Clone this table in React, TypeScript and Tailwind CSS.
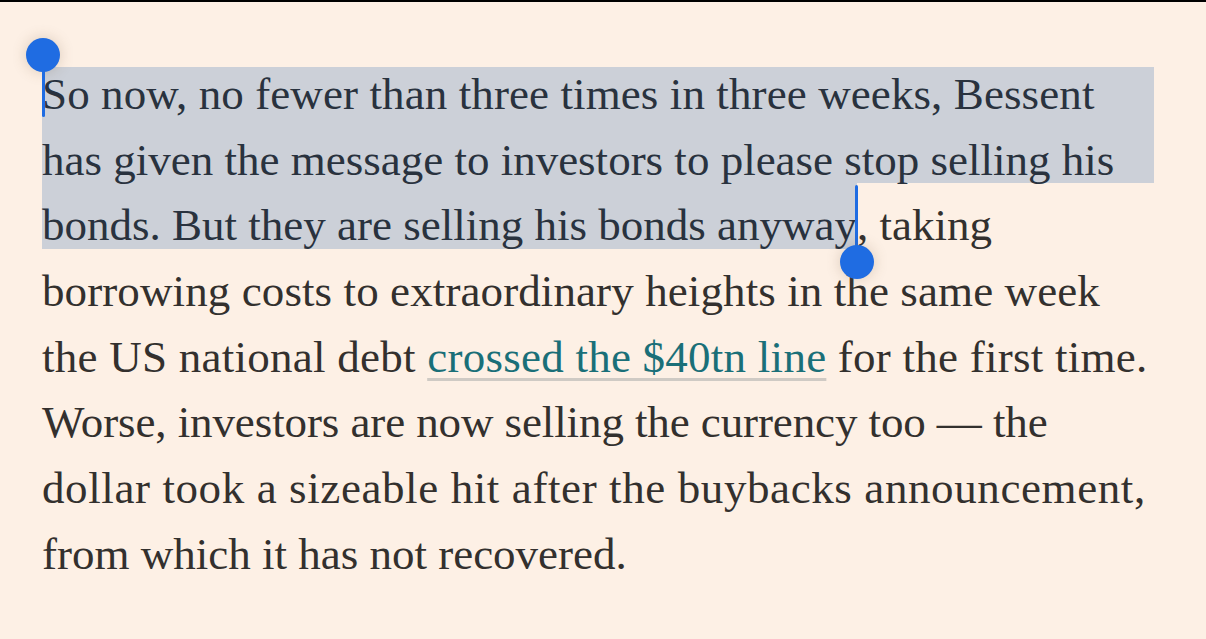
const serif = { fontFamily: '"Liberation Serif", "DejaVu Serif", serif' };

// iOS-style selection handles, anchored to the start / end of the selected text
function StartHandle() {
  return (
    <span className="absolute -left-[16px] -top-[24px] z-20 flex w-[34px] flex-col items-center">
      <span className="h-[34px] w-[34px] rounded-full bg-[#1f6ce2] shadow-[0_0_14px_rgba(120,90,60,0.25)]" />
      <span className="-mt-[2px] h-[47px] w-[3px] rounded-b-full bg-[#1f6ce2]" />
    </span>
  );
}

function EndHandle() {
  return (
    <span className="absolute -right-[17px] -top-[8px] z-20 flex w-[34px] flex-col items-center">
      <span className="h-[62px] w-[3px] rounded-t-full bg-[#1f6ce2]" />
      <span className="-mt-[2px] h-[34px] w-[34px] rounded-full bg-[#1f6ce2] shadow-[0_0_14px_rgba(120,90,60,0.25)]" />
    </span>
  );
}

export default function App() {
  const sel = 'relative z-10 text-[#29323e]';
  return (
    <main className="min-h-[639px] w-full overflow-hidden border-t-2 border-black bg-[#fdf0e5]">
      <div
        className="ml-[42px] w-[1112px] whitespace-nowrap pt-[60px] text-[45px] leading-[65.7px] text-[#33302e]"
        style={serif}
      >
        <div className="relative h-[65.7px] tracking-[0.1px]">
          <div className="absolute inset-x-0 top-[5px] bottom-0 bg-[#ccd0d8]" />
          <StartHandle />
          <span className={sel}>So now, no fewer than three times in three weeks, Bessent</span>
        </div>
        <div className="relative h-[65.7px]">
          <div className="absolute inset-x-0 top-0 bottom-[10px] bg-[#ccd0d8]" />
          <span className={sel}>has given the message to investors to please stop selling his</span>
        </div>
        <div className="h-[65.7px]">
          <span className="relative inline-block">
            <span className="absolute inset-x-0 -top-[10px] bottom-[10px] bg-[#ccd0d8]" />
            <span className={sel}>bonds. But they are selling his bonds anyway</span>
            <EndHandle />
          </span>
          , taking
        </div>
        <div className="h-[65.7px] tracking-[0.1px]">
          borrowing costs to extraordinary heights in the same week
        </div>
        <div className="h-[65.7px] tracking-[0.25px]">
          the US national debt{' '}
          <a
            href="#"
            className="text-[#1a6f78] underline decoration-[#cfcac4] decoration-[3px] underline-offset-[6px]"
          >
            crossed the $40tn line
          </a>{' '}
          for the first time.
        </div>
        <div className="h-[65.7px] tracking-[-0.1px]">
          Worse, investors are now selling the currency too — the
        </div>
        <div className="h-[65.7px] tracking-[0.6px]">
          dollar took a sizeable hit after the buybacks announcement,
        </div>
        <div className="h-[65.7px]">from which it has not recovered.</div>
      </div>
    </main>
  );
}
